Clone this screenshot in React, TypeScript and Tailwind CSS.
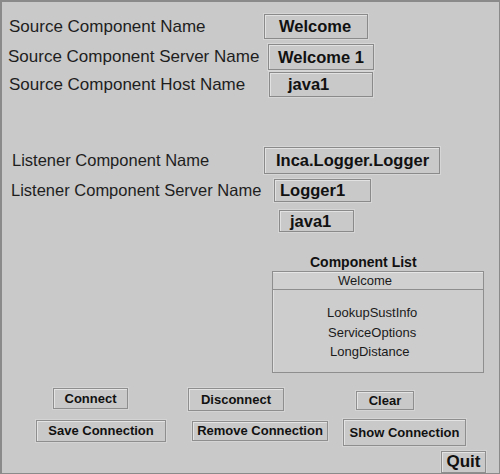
export default function App() {
  const box = 'flex items-center border border-[#8a8a8a] shadow-[inset_1px_1px_0_#e2e2e2,0_0_0_1px_#d6d6d6] font-bold text-[#111]';
  const btn = 'flex items-center justify-center border border-[#8e8e8e] shadow-[inset_1px_1px_0_#e4e4e4,0_0_0_1px_#d4d4d4] font-bold text-[13px] text-[#111]';
  return (
    <div
      className="w-[500px] h-[474px] bg-[#c9c9c9] border-t-2 border-l-2 border-r border-b border-[#8a8a8a] flex flex-col text-[#1e1e1e] overflow-hidden"
      style={{ fontFamily: '"Liberation Sans", Arial, sans-serif' }}
    >
      {/* Source component */}
      <div className="flex items-center h-[25px] mt-[12px]">
        <div className="w-[262px] pl-[7px] text-[17px] shrink-0">Source Component Name</div>
        <div className={`${box} w-[104px] h-[25px] pl-[14px] text-[16.5px]`}>Welcome</div>
      </div>
      <div className="flex items-center h-[26px] mt-[5px]">
        <div className="w-[266px] pl-[6px] text-[17px] shrink-0">Source Component Server Name</div>
        <div className={`${box} w-[106px] h-[26px] pl-[9px] text-[16.5px]`}>Welcome 1</div>
      </div>
      <div className="flex items-center h-[25px] mt-[2px]">
        <div className="w-[267px] pl-[7px] text-[17px] shrink-0">Source Component Host Name</div>
        <div className={`${box} w-[104px] h-[25px] pl-[18px] text-[16.5px]`}>java1</div>
      </div>

      {/* Listener component */}
      <div className="flex items-center h-[27px] mt-[50px]">
        <div className="w-[262px] pl-[10px] text-[16.5px] shrink-0">Listener Component Name</div>
        <div className={`${box} w-[176px] h-[27px] pl-[11px] text-[16.5px]`}>Inca.Logger.Logger</div>
      </div>
      <div className="flex items-center h-[23px] mt-[5px]">
        <div className="w-[272px] pl-[9px] text-[16.5px] shrink-0">Listener Component Server Name</div>
        <div className={`${box} w-[97px] h-[23px] pl-[5px] text-[16.5px]`}>Logger1</div>
      </div>
      <div className="flex items-center h-[22px] mt-[8px]">
        <div className="w-[277px] shrink-0" />
        <div className={`${box} w-[75px] h-[22px] pl-[10px] text-[16.5px]`}>java1</div>
      </div>

      {/* Component list */}
      <div className="ml-[308px] mt-[22px] h-[16px] leading-[16px] text-[14px] font-bold text-[#111]">Component List</div>
      <div className="ml-[270px] mt-[1px] w-[212px] h-[102px] border border-[#8e8e8e] shadow-[inset_1px_1px_0_#e0e0e0] bg-[#cdcdcd] flex flex-col text-[13px] text-[#1a1a1a]">
        <div className="h-[18px] border-b border-[#8e8e8e] bg-[#d0d0d0] shadow-[inset_0_1px_0_#e6e6e6] pl-[65px] leading-[17px]">Welcome</div>
        <div className="pl-[54px] mt-[15px] leading-[16px]">LookupSustInfo</div>
        <div className="pl-[55px] mt-[4px] leading-[16px]">ServiceOptions</div>
        <div className="pl-[57px] mt-[3px] leading-[16px]">LongDistance</div>
      </div>

      {/* Buttons */}
      <div className="flex items-start mt-[15px] h-[24px]">
        <div className={`${btn} ml-[51px] w-[75px] h-[21px]`}>Connect</div>
        <div className={`${btn} ml-[60px] w-[96px] h-[23px]`}>Disconnect</div>
        <div className={`${btn} ml-[72px] mt-[3px] w-[58px] h-[19px]`}>Clear</div>
      </div>
      <div className="flex items-start mt-[7px] h-[27px]">
        <div className={`${btn} ml-[34px] mt-[1px] w-[130px] h-[22px]`}>Save Connection</div>
        <div className={`${btn} ml-[26px] mt-[2px] w-[136px] h-[20px]`}>Remove Connection</div>
        <div className={`${btn} ml-[15px] w-[123px] h-[27px]`}>Show Connection</div>
      </div>
      <div className="flex mt-[5px]">
        <div className={`${btn} ml-[439px] w-[45px] h-[22px] text-[17px]`}>Quit</div>
      </div>
    </div>
  );
}
